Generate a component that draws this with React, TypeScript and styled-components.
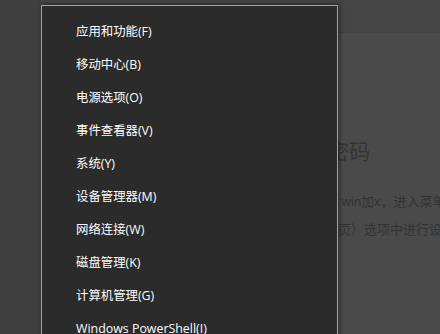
import React from "react";
import styled, { createGlobalStyle } from "styled-components";

const GlobalStyle = createGlobalStyle`
  html, body { margin: 0; padding: 0; background: #4a4a4a; overflow: hidden; }
  * { box-sizing: border-box; }
`;

const Page = styled.div`
  position: relative;
  width: 440px;
  height: 334px;
  overflow: hidden;
  display: grid;
  grid-template-columns: 41px 1fr;
  font-family: "Liberation Sans", "Noto Sans CJK SC", sans-serif;
`;

const Sidebar = styled.aside`
  background: #3f3f3f;
`;

const Main = styled.main`
  display: flex;
  flex-direction: column;
  background: #4a4a4a;
`;

const Header = styled.header`
  height: 33px;
  flex: none;
  background: #454545;
  border-bottom: 1px solid #424242;
`;

const Article = styled.article`
  padding: 107px 0 0 245px;
  display: flex;
  flex-direction: column;
  white-space: nowrap;
`;

const Heading = styled.h1`
  margin: 0 0 24px;
  font-size: 21px;
  line-height: 24px;
  font-weight: 400;
  color: #343434;
`;

const Para = styled.p`
  margin: 0;
  font-size: 13px;
  line-height: 28px;
  color: #333333;
`;

const Menu = styled.ul`
  position: absolute;
  left: 41px;
  top: 5px;
  width: 297px;
  height: 360px;
  margin: 0;
  padding: 9px 0 0;
  list-style: none;
  background: #2b2b2b;
  border: 1px solid #a2a2a2;
  box-shadow: 2px 0 4px rgba(0, 0, 0, 0.3), 0 -2px 4px rgba(0, 0, 0, 0.2);
  font-family: "Open Sans", "Noto Sans CJK SC", sans-serif;
`;

const Item = styled.li`
  height: 33px;
  line-height: 33px;
  padding-left: 34px;
  font-size: 12.4px;
  color: #ffffff;
  white-space: nowrap;
`;

const items = [
  "应用和功能(F)",
  "移动中心(B)",
  "电源选项(O)",
  "事件查看器(V)",
  "系统(Y)",
  "设备管理器(M)",
  "网络连接(W)",
  "磁盘管理(K)",
  "计算机管理(G)",
  "Windows PowerShell(I)",
];

export default function App() {
  return (
    <>
      <GlobalStyle />
      <Page>
        <Sidebar />
        <Main>
          <Header />
          <Article>
            <Heading>开机密码</Heading>
            <Para>第一步按 win加x，进入菜单</Para>
            <Para>进入（主页）选项中进行设置</Para>
          </Article>
        </Main>
        <Menu>
          {items.map((t) => (
            <Item key={t}>{t}</Item>
          ))}
        </Menu>
      </Page>
    </>
  );
}
